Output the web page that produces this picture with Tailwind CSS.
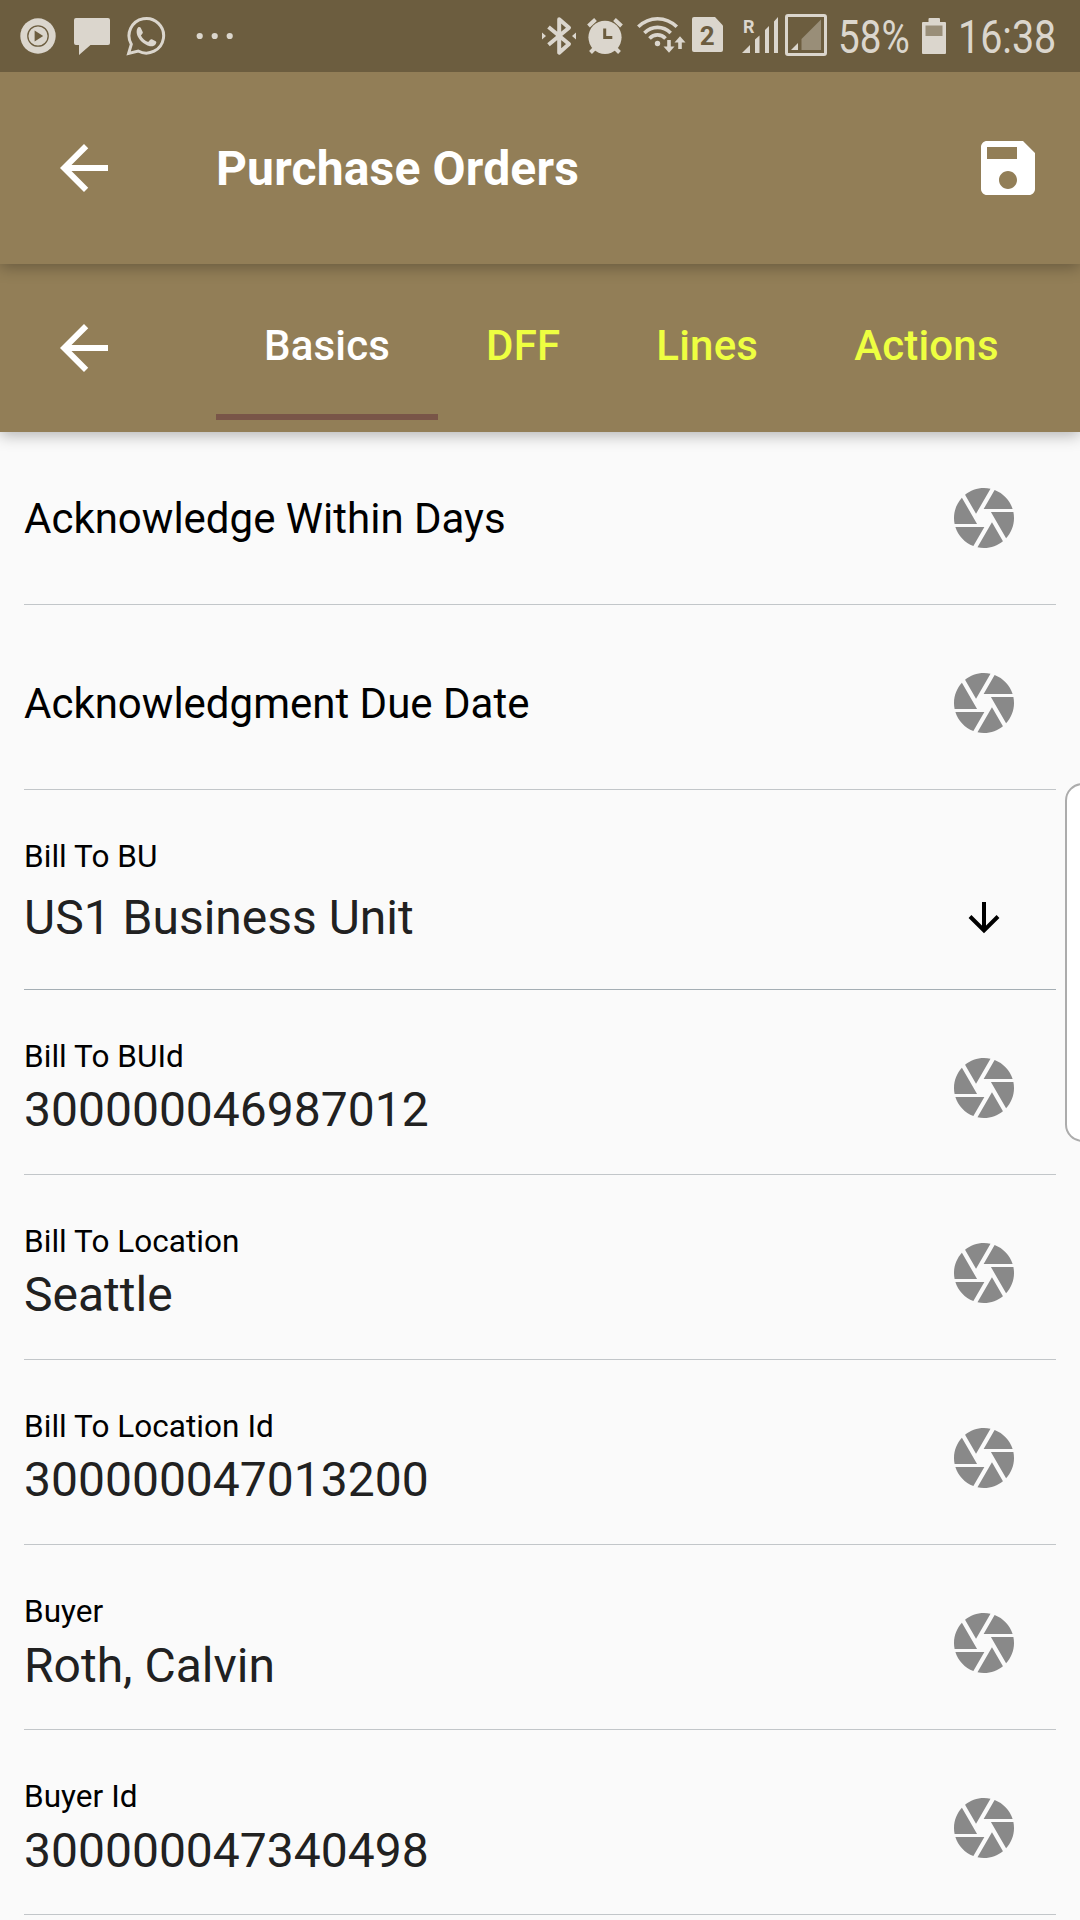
<!DOCTYPE html>
<html lang="en">
<head>
<meta charset="utf-8">
<title>Purchase Orders</title>
<script src="https://cdn.jsdelivr.net/npm/@tailwindcss/browser@4"></script>
</head>
<body class="relative h-[1920px] w-[1080px] overflow-hidden bg-[#fafafa] font-['Roboto',sans-serif] text-black">
<svg class="hidden">
  <symbol id="back" viewBox="0 0 24 24"><path d="M20 11H7.83l5.59-5.59L12 4l-8 8 8 8 1.41-1.41L7.83 13H20v-2z"/></symbol>
  <symbol id="camera" viewBox="0 0 24 24"><path d="M9.4 10.5l4.77-8.26C13.47 2.09 12.75 2 12 2c-2.4 0-4.6.85-6.32 2.25l3.66 6.35.06-.1zM21.54 9c-.92-2.92-3.15-5.26-6-6.34L11.88 9h9.66zm.26 1h-7.49l.29.5 4.76 8.25C21 16.97 22 14.61 22 12c0-.69-.07-1.35-.2-2zM8.54 12l-3.9-6.75C3.01 7.03 2 9.39 2 12c0 .69.07 1.35.2 2h7.49l-1.15-2zm-6.08 3c.92 2.92 3.15 5.26 6 6.34L12.12 15H2.46zm11.27 0l-3.9 6.76c.7.15 1.42.24 2.17.24 2.4 0 4.6-.85 6.32-2.25l-3.66-6.35-.93 1.6z"/></symbol>
</svg>

<!-- status bar -->
<div class="relative z-30 flex h-[72px] items-start justify-between bg-[#6c5d3f] text-[#dbd6cd]">
  <div class="flex pl-5">
    <svg class="h-[72px] w-9" viewBox="20 0 36 72" fill="currentColor"><circle cx="38" cy="36" r="17.7"/><circle cx="38" cy="36" r="10.2" fill="none" stroke="#6c5d3f" stroke-width="1.3"/><path d="M34.6 30.6v10.8l8.6-5.4z" fill="#6c5d3f"/></svg>
    <svg class="ml-[18px] h-[72px] w-9" viewBox="74 0 36 72" fill="currentColor"><path d="M76 18h32a2 2 0 0 1 2 2v23a2 2 0 0 1-2 2H90.500L79 55V45h-3a2 2 0 0 1-2-2V20a2 2 0 0 1 2-2z"/></svg>
    <svg class="ml-4 h-[72px] w-10" viewBox="126 0 40 72"><path d="M128.600 53.500L131.300 44.300A17.300 17.300 0 1 1 138.200 51z" fill="none" stroke="currentColor" stroke-width="3"/><path d="M138.200 27.300c.9-.7 2-.5 2.500.4l2 4.300c.3.700.1 1.200-.4 1.800l-1.400 1.700c1.700 3.200 4.100 5.300 7.300 6.500l2-2.300c.5-.6 1-.7 1.700-.4l3.800 2c.8.400.8 1.300.2 2.400-1.100 2.200-3.800 3-6 2.500-6.400-1.500-11.800-7.200-13-12.200-.6-2.600-.1-5.500 1.300-6.700z" fill="currentColor"/></svg>
    <svg class="ml-[29px] h-[72px] w-10" viewBox="195 0 40 72" fill="currentColor"><circle cx="199.700" cy="36" r="3.100"/><circle cx="214.700" cy="36" r="3.100"/><circle cx="229.700" cy="36" r="3.100"/></svg>
  </div>
  <div class="flex">
    <svg class="h-[72px] w-9" viewBox="541 0 36 72" fill="none" stroke="currentColor" stroke-width="4"><path d="M548.500 27l20.500 17-9.800 8.700V19.300l9.800 8.400-20.500 17" stroke-linejoin="round"/><path d="M542 32.500v7l4-3.500zM576 32.500v7l-4-3.500z" fill="currentColor" stroke="none"/></svg>
    <svg class="ml-[10px] h-[72px] w-9" viewBox="587 0 36 72" stroke="currentColor" stroke-width="4"><circle cx="605" cy="37.300" r="16.600" fill="currentColor" stroke="none"/><path d="M588.500 26l7-6.500M621.500 26l-7-6.500M590.500 52.500l4-4M619.500 52.500l-4-4"/><path d="M604.700 28.500v9h7.600" fill="none" stroke="#6c5d3f" stroke-width="3"/></svg>
    <svg class="ml-[13px] h-[72px] w-[50px]" viewBox="636 0 50 72" fill="none" stroke="currentColor" stroke-width="3.600"><path d="M638.300 26.800c11-10.800 27.500-10.800 38.500 0M644.400 33c7.500-7.500 18.800-7.500 26.300 0M649.500 38.500c4.500-4.800 11.500-4.800 16 0"/><circle cx="657.500" cy="43.500" r="2.700" fill="currentColor" stroke="none"/><path d="M669 40v9.500M680 49v-9" /><path d="M663.500 46.500h11l-5.500 6.300zM674.500 42.500h11l-5.500-6.300z" fill="currentColor" stroke="none"/></svg>
    <svg class="ml-[5px] h-[72px] w-8" viewBox="691 0 32 72"><path d="M694 17h21l8 8.500V50a2 2 0 0 1-2 2h-27a2 2 0 0 1-2-2V19a2 2 0 0 1 2-2z" fill="currentColor"/><text x="707.200" y="44.800" text-anchor="middle" font-size="26" font-weight="700" fill="#6c5d3f">2</text></svg>
    <svg class="ml-[18px] h-[72px] w-[38px]" viewBox="741 0 38 72" fill="currentColor"><text x="743" y="32.500" font-size="17.500" font-weight="700" textLength="11.500" lengthAdjust="spacingAndGlyphs">R</text><path d="M742 53l8-8v8zM755 53V39.500l4.500-4V53zM765 53V30l4-4v27zM774 53V21.500l4-4.500v36z"/></svg>
    <svg class="ml-[6px] h-[72px] w-[43px]" viewBox="785 0 43 72"><rect x="786.500" y="15.500" width="39" height="39" rx="1.500" fill="none" stroke="currentColor" stroke-width="3"/><path d="M791 50l7-7v7z" fill="currentColor"/><path d="M801.500 50V39L821 19.500V50z" fill="#998e78"/></svg>
    <span class="ml-[10px] w-[73px] origin-left scale-x-[0.84] pt-2.5 text-[46px] leading-[55px]">58%</span>
    <svg class="ml-[11px] h-[72px] w-6" viewBox="922 0 24 72"><path d="M923 22h5.500v-3a1 1 0 0 1 1-1h9.500a1 1 0 0 1 1 1v3h5a1 1 0 0 1 1 1v30a1 1 0 0 1-1 1h-22a1 1 0 0 1-1-1V23a1 1 0 0 1 1-1z" fill="currentColor"/><path d="M925.500 25.500h17V36h-17z" fill="#998e78"/></svg>
    <span class="ml-[12px] w-[122px] origin-left scale-x-[0.858] pt-2.5 text-[46px] leading-[55px]">16:38</span>
  </div>
</div>

<!-- app bar -->
<header class="relative z-20 flex h-[192px] items-start bg-[#927e57] px-9 pt-[60px] text-white shadow-[0_3px_15px_rgba(0,0,0,0.3)]">
  <svg class="ml-3 size-[72px]" fill="currentColor"><use href="#back"/></svg>
  <h1 class="ml-24 pt-[9px] text-[48px] leading-[56px] font-bold tracking-[0.17px]">Purchase Orders</h1>
  <svg class="ml-auto size-[72px]" viewBox="0 0 24 24" fill="currentColor"><path d="M17 3H5c-1.110 0-2 .9-2 2v14c0 1.100.89 2 2 2h14c1.100 0 2-.9 2-2V7l-4-4zm-5 16c-1.660 0-3-1.340-3-3s1.340-3 3-3 3 1.340 3 3-1.340 3-3 3zm3-10H5V5h10v4z"/></svg>
</header>

<!-- tabs -->
<nav class="relative z-10 flex h-[168px] bg-[#927e57] pl-12 text-[42px] leading-[50px] font-medium tracking-[0.18px] text-[#eeff41] shadow-[0_3px_15px_rgba(0,0,0,0.3)]">
  <svg class="mt-12 mr-24 size-[72px] text-white" fill="currentColor"><use href="#back"/></svg>
  <div class="mb-3 border-b-6 border-[#795548] px-12 pt-[57px] text-white">Basics</div>
  <div class="px-12 pt-[57px]">DFF</div>
  <div class="px-12 pt-[57px]">Lines</div>
  <div class="px-12 pt-[57px]">Actions</div>
</nav>

<!-- fields -->
<main class="px-6">
  <div class="flex h-[173px] justify-between border-b border-[#c2c6c9] pr-9 pt-[50px]">
    <div class="pt-3 text-[42px] leading-[50px]">Acknowledge Within Days</div>
    <svg class="size-[72px] fill-[#898989]"><use href="#camera"/></svg>
  </div>
  <div class="flex h-[185px] justify-between border-b border-[#c2c6c9] pr-9 pt-[62px]">
    <div class="pt-3 text-[42px] leading-[50px]">Acknowledgment Due Date</div>
    <svg class="size-[72px] fill-[#898989]"><use href="#camera"/></svg>
  </div>
  <div class="flex h-[200px] justify-between border-b border-[#a4aeb4] pr-9 pt-[49px]">
    <div><div class="text-[31.5px] leading-9 tracking-[0.05px]">Bill To BU</div><div class="mt-[15px] text-[48px] leading-[56px] text-[#212121]">US1 Business Unit</div></div>
    <svg class="mt-[43px] size-[72px]" viewBox="948 882 72 72" fill="none" stroke="#000" stroke-width="4"><path d="M984 902v28M970 916.500l14 14 14-14"/></svg>
  </div>
  <div class="flex h-[185px] justify-between border-b border-[#c2c6c9] pr-9 pt-[49px]">
    <div><div class="text-[31.5px] leading-9 tracking-[0.05px]">Bill To BUId</div><div class="mt-[7px] text-[48px] leading-[56px] text-[#212121]">300000046987012</div></div>
    <svg class="mt-[13px] size-[72px] fill-[#898989]"><use href="#camera"/></svg>
  </div>
  <div class="flex h-[185px] justify-between border-b border-[#c2c6c9] pr-9 pt-[49px]">
    <div><div class="text-[31.5px] leading-9 tracking-[0.05px]">Bill To Location</div><div class="mt-[7px] text-[48px] leading-[56px] text-[#212121]">Seattle</div></div>
    <svg class="mt-[13px] size-[72px] fill-[#898989]"><use href="#camera"/></svg>
  </div>
  <div class="flex h-[185px] justify-between border-b border-[#c2c6c9] pr-9 pt-[49px]">
    <div><div class="text-[31.5px] leading-9 tracking-[0.05px]">Bill To Location Id</div><div class="mt-[7px] text-[48px] leading-[56px] text-[#212121]">300000047013200</div></div>
    <svg class="mt-[13px] size-[72px] fill-[#898989]"><use href="#camera"/></svg>
  </div>
  <div class="flex h-[185px] justify-between border-b border-[#c2c6c9] pr-9 pt-[49px]">
    <div><div class="text-[31.5px] leading-9 tracking-[0.05px]">Buyer</div><div class="mt-2 text-[48px] leading-[56px] text-[#212121]">Roth, Calvin</div></div>
    <svg class="mt-[13px] size-[72px] fill-[#898989]"><use href="#camera"/></svg>
  </div>
  <div class="flex h-[185px] justify-between border-b border-[#c2c6c9] pr-9 pt-[49px]">
    <div><div class="text-[31.5px] leading-9 tracking-[0.05px]">Buyer Id</div><div class="mt-2 text-[48px] leading-[56px] text-[#212121]">300000047340498</div></div>
    <svg class="mt-[13px] size-[72px] fill-[#898989]"><use href="#camera"/></svg>
  </div>
</main>

<!-- edge panel handle -->
<div class="absolute top-[783px] -right-5 h-[359px] w-[35px] rounded-[18px] border-2 border-[#acacac] bg-white"></div>
</body>
</html>
